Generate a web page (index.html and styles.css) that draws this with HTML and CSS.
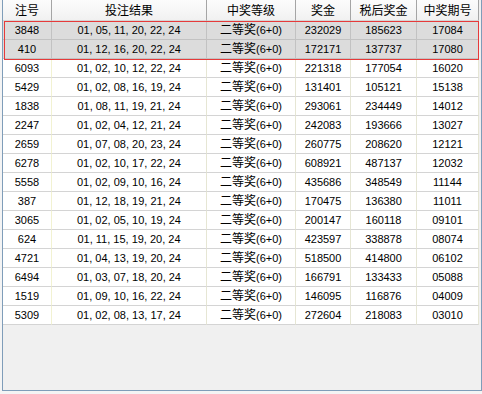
FILE: index.html
```html
<!DOCTYPE html>
<html>
<head>
<meta charset="utf-8">
<link rel="stylesheet" href="styles.css">
</head>
<body>
<div class="frame">
  <table class="grid">
    <colgroup>
      <col class="c1"><col class="c2"><col class="c3"><col class="c4"><col class="c5"><col class="c6">
    </colgroup>
    <thead>
      <tr><th>注号</th><th>投注结果</th><th>中奖等级</th><th>奖金</th><th>税后奖金</th><th>中奖期号</th></tr>
    </thead>
    <tbody>
      <tr class="sel"><td>3848</td><td>01, 05, 11, 20, 22, 24</td><td><span class="zh">二等奖</span>(6+0)</td><td>232029</td><td>185623</td><td>17084</td></tr>
      <tr class="sel"><td>410</td><td>01, 12, 16, 20, 22, 24</td><td><span class="zh">二等奖</span>(6+0)</td><td>172171</td><td>137737</td><td>17080</td></tr>
      <tr><td>6093</td><td>01, 02, 10, 12, 22, 24</td><td><span class="zh">二等奖</span>(6+0)</td><td>221318</td><td>177054</td><td>16020</td></tr>
      <tr><td>5429</td><td>01, 02, 08, 16, 19, 24</td><td><span class="zh">二等奖</span>(6+0)</td><td>131401</td><td>105121</td><td>15138</td></tr>
      <tr><td>1838</td><td>01, 08, 11, 19, 21, 24</td><td><span class="zh">二等奖</span>(6+0)</td><td>293061</td><td>234449</td><td>14012</td></tr>
      <tr><td>2247</td><td>01, 02, 04, 12, 21, 24</td><td><span class="zh">二等奖</span>(6+0)</td><td>242083</td><td>193666</td><td>13027</td></tr>
      <tr><td>2659</td><td>01, 07, 08, 20, 23, 24</td><td><span class="zh">二等奖</span>(6+0)</td><td>260775</td><td>208620</td><td>12121</td></tr>
      <tr><td>6278</td><td>01, 02, 10, 17, 22, 24</td><td><span class="zh">二等奖</span>(6+0)</td><td>608921</td><td>487137</td><td>12032</td></tr>
      <tr><td>5558</td><td>01, 02, 09, 10, 16, 24</td><td><span class="zh">二等奖</span>(6+0)</td><td>435686</td><td>348549</td><td>11144</td></tr>
      <tr><td>387</td><td>01, 12, 18, 19, 21, 24</td><td><span class="zh">二等奖</span>(6+0)</td><td>170475</td><td>136380</td><td>11011</td></tr>
      <tr><td>3065</td><td>01, 02, 05, 10, 19, 24</td><td><span class="zh">二等奖</span>(6+0)</td><td>200147</td><td>160118</td><td>09101</td></tr>
      <tr><td>624</td><td>01, 11, 15, 19, 20, 24</td><td><span class="zh">二等奖</span>(6+0)</td><td>423597</td><td>338878</td><td>08074</td></tr>
      <tr><td>4721</td><td>01, 04, 13, 19, 20, 24</td><td><span class="zh">二等奖</span>(6+0)</td><td>518500</td><td>414800</td><td>06102</td></tr>
      <tr><td>6494</td><td>01, 03, 07, 18, 20, 24</td><td><span class="zh">二等奖</span>(6+0)</td><td>166791</td><td>133433</td><td>05088</td></tr>
      <tr><td>1519</td><td>01, 09, 10, 16, 22, 24</td><td><span class="zh">二等奖</span>(6+0)</td><td>146095</td><td>116876</td><td>04009</td></tr>
      <tr><td>5309</td><td>01, 02, 08, 13, 17, 24</td><td><span class="zh">二等奖</span>(6+0)</td><td>272604</td><td>218083</td><td>03010</td></tr>
    </tbody>
  </table>
  <div class="focus"></div>
</div>
</body>
</html>
```

FILE: styles.css
```css
html, body {
  margin: 0;
  padding: 0;
}
body {
  background: #f4f4f4;
  width: 482px;
  height: 394px;
  overflow: hidden;
  font-family: "Liberation Sans", "Noto Sans CJK SC", sans-serif;
  font-size: 11px;
  color: #000;
}
.frame {
  position: relative;
  box-sizing: border-box;
  margin: -1px 0 0 2px;
  width: 480px;
  height: 392px;
  border: 1px solid #7f9db9;
  background: #f0f0f0;
}
.grid {
  table-layout: fixed;
  border-collapse: separate;
  border-spacing: 0;
  width: 476px;
}
.c1 { width: 49px; }
.c2 { width: 155px; }
.c3 { width: 89px; }
.c4 { width: 55px; }
.c5 { width: 66px; }
.c6 { width: 62px; }
.grid th {
  padding: 0;
  height: 20px;
  line-height: 20px;
  font-family: "Noto Sans CJK SC", sans-serif;
  font-size: 12px;
  font-weight: normal;
  text-align: center;
  background: linear-gradient(#fcfcfc, #f1f1f1);
  border-right: 1px solid #a5a5a5;
  border-bottom: 1px solid #d5d5d5;
}
.grid td {
  padding: 0;
  height: 18px;
  line-height: 18px;
  text-align: center;
  white-space: nowrap;
  overflow: hidden;
  background: #ffffff;
  border-right: 1px solid #e6e6d4;
  border-bottom: 1px solid #d4d4d4;
}
.grid td:first-child {
  border-right-color: #f2f2d2;
}
.grid tr.sel td {
  background: #dcdcdc;
  border-right-color: #c2c2c2;
  border-bottom-color: #c2c2c2;
}
.zh {
  font-family: "Noto Sans CJK SC", sans-serif;
  font-size: 12px;
  line-height: 12px;
  letter-spacing: 0;
}
.focus {
  position: absolute;
  left: 1px;
  top: 21px;
  width: 473px;
  height: 37px;
  border: 1px solid #e63a3a;
}
```
